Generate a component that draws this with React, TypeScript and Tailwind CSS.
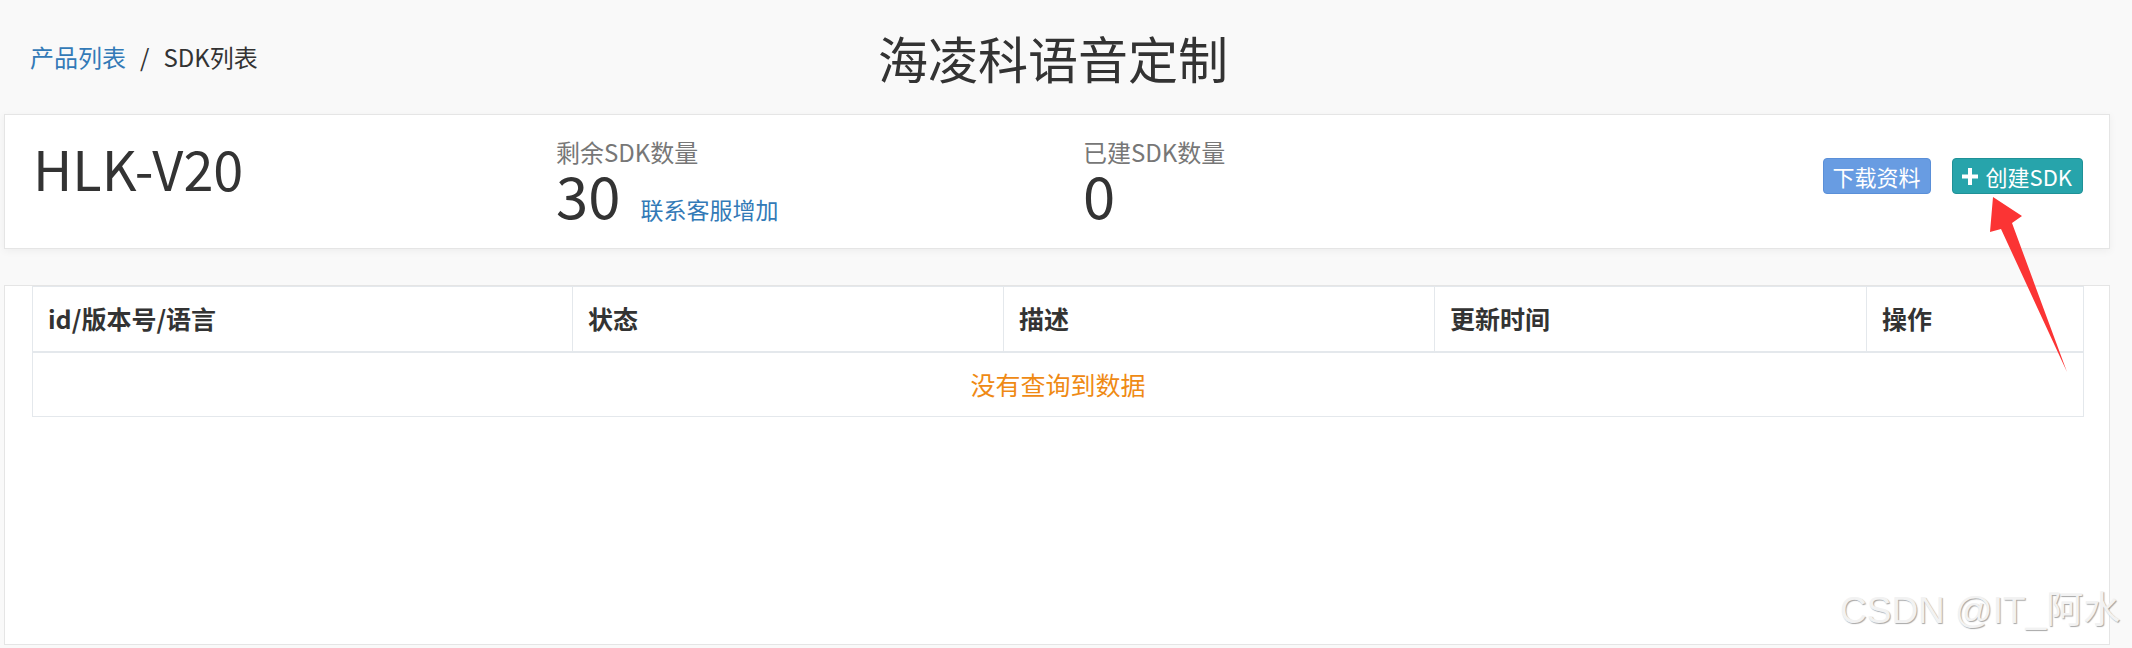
import React from 'react';

const columns = [
  { title: 'id/版本号/语言', width: 'w-[540px]' },
  { title: '状态', width: 'w-[431px]' },
  { title: '描述', width: 'w-[431px]' },
  { title: '更新时间', width: 'w-[432px]' },
  { title: '操作', width: 'w-[217px]' },
];

function Stat({ label, value, extra }: { label: string; value: string; extra?: string }) {
  return (
    <div className="pt-[25px]">
      <div className="text-[24px] leading-[24px] text-[#777]">{label}</div>
      <div className="flex items-baseline mt-[6px]">
        <span className="text-[58px] leading-[48px] text-[#333]">{value}</span>
        {extra && (
          <a className="ml-[20px] text-[23px] leading-[24px] text-[#337ab7] cursor-pointer">{extra}</a>
        )}
      </div>
    </div>
  );
}

export default function App() {
  return (
    <div className="relative w-[2132px] h-[648px] overflow-hidden bg-[#f9f9f9] font-['Noto_Sans_CJK_SC','Noto_Sans',sans-serif] text-[#333]">
      {/* header */}
      <div className="h-[114px] flex items-center">
        <div className="w-[878px] pl-[30px] flex items-center text-[24px]">
          <a className="text-[#337ab7] cursor-pointer">产品列表</a>
          <span className="px-[14px] text-[#333]">/</span>
          <span className="text-[#333]">SDK列表</span>
        </div>
        <h1 className="text-[50px] leading-[60px] font-normal text-[#333]">海凌科语音定制</h1>
      </div>

      {/* product card */}
      <div className="ml-[4px] mr-[22px] h-[135px] bg-white border border-[#e5e5e5] shadow-[0_2px_8px_rgba(0,0,0,0.05)] flex pl-[28px] pr-[26px]">
        <div className="w-[523px] pt-[23px]">
          <div className="text-[54px] leading-[60px] text-[#333]">HLK-V20</div>
        </div>
        <div className="w-[527px]">
          <Stat label="剩余SDK数量" value="30" extra="联系客服增加" />
        </div>
        <div className="flex-1">
          <Stat label="已建SDK数量" value="0" />
        </div>
        <div className="pt-[43px] flex items-start gap-[21px]">
          <button className="h-[36px] px-[9px] rounded-[4px] bg-[#689ce2] border border-[#5a8fd8] text-white text-[22px] leading-none">
            下载资料
          </button>
          <button className="h-[36px] pl-[9px] pr-[10px] rounded-[4px] bg-[#27a4ab] border border-[#1f9197] text-white text-[22px] leading-none flex items-center gap-[8px]">
            <svg width="16" height="17" viewBox="0 0 16 17" className="shrink-0">
              <path d="M6 0h4v6.5h6v4h-6V17H6v-6.5H0v-4h6z" fill="#fff" />
            </svg>
            <span>创建SDK</span>
          </button>
        </div>
      </div>

      {/* sdk table card */}
      <div className="ml-[4px] mr-[22px] mt-[36px] h-[360px] bg-white border border-[#e5e5e5] pl-[27px] pr-[26px]">
        <table className="w-full table-fixed border-collapse border border-[#e4e8ec]">
          <thead>
            <tr className="h-[65px]">
              {columns.map((c) => (
                <th
                  key={c.title}
                  className={`${c.width} border border-b-2 border-[#e4e8ec] pl-[15px] text-left text-[25px] font-bold text-[#333]`}
                >
                  {c.title}
                </th>
              ))}
            </tr>
          </thead>
          <tbody>
            <tr className="h-[65px]">
              <td colSpan={5} className="border border-[#e4e8ec] text-center text-[25px] text-[#ef8a14]">
                没有查询到数据
              </td>
            </tr>
          </tbody>
        </table>
      </div>

      {/* annotation arrow */}
      <svg
        className="absolute left-0 top-0 pointer-events-none"
        width="2132"
        height="648"
        viewBox="0 0 2132 648"
      >
        <polygon
          points="1993,197 2022,216 2012,223 2067,372 2001,229 1990,232"
          fill="#fb3434"
        />
      </svg>

      {/* watermark */}
      <div className="absolute left-[1840px] top-[592px] text-[37px] leading-none font-['Liberation_Sans','Noto_Sans_CJK_SC',sans-serif] text-[#f2f2f2] [text-shadow:1px_1px_1px_rgba(0,0,0,0.35)] whitespace-nowrap pointer-events-none">
        CSDN @IT_阿水
      </div>
    </div>
  );
}
